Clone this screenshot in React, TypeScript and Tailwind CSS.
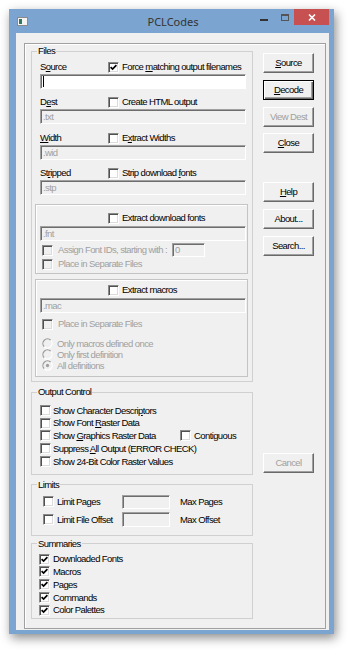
import React from 'react'

const font = "font-['Liberation_Sans',Arial,sans-serif] text-[9.5px] tracking-[-0.6px] leading-none whitespace-nowrap"

function Check({ checked = false, disabled = false }: { checked?: boolean; disabled?: boolean }) {
  return (
    <span
      className={`flex h-[11px] w-[11px] shrink-0 items-center justify-center border border-t-[#8a8a8a] border-l-[#8a8a8a] border-r-white border-b-white shadow-[inset_1px_1px_0_#505050,inset_-1px_-1px_0_#dcdcdc] ${
        disabled ? 'bg-[#f0f0f0]' : 'bg-white'
      }`}
    >
      {checked && (
        <svg width="7" height="7" viewBox="0 0 7 7">
          <path d="M0.6 3.1 L2.6 5.1 L6.4 1.1" stroke="#000" strokeWidth="1.7" fill="none" />
        </svg>
      )}
    </span>
  )
}

function Radio({ on = false }: { on?: boolean }) {
  return (
    <svg width="11" height="11" viewBox="0 0 12 12" className="shrink-0">
      <circle cx="6" cy="6" r="5" fill="#f0f0f0" />
      <path d="M9.54 2.46 A5 5 0 0 0 2.46 9.54" stroke="#9a9a9a" strokeWidth="1.3" fill="none" />
      <path d="M2.46 9.54 A5 5 0 0 0 9.54 2.46" stroke="#ffffff" strokeWidth="1.3" fill="none" />
      {on && <circle cx="6" cy="6" r="1.8" fill="#a0a0a0" />}
    </svg>
  )
}

function Field({ text = '', white = false, className = '' }: { text?: string; white?: boolean; className?: string }) {
  return (
    <div
      className={`flex items-center border border-t-[#a0a0a0] border-l-[#a0a0a0] border-r-white border-b-white shadow-[inset_1px_1px_0_#6d6d6d] pl-[2px] ${
        white ? 'bg-white' : 'bg-[#f0f0f0]'
      } ${className}`}
    >
      {white && <span className="h-[11px] w-px bg-black" />}
      <span className="text-[#a0a0a0]">{text}</span>
    </div>
  )
}

function Btn({ children, def = false, off = false, className = '' }: { children: React.ReactNode; def?: boolean; off?: boolean; className?: string }) {
  return (
    <div
      className={`flex h-[20px] w-[51px] items-center justify-center bg-[#f0f0f0] ${
        def
          ? 'border border-black shadow-[inset_1px_1px_0_#fff,inset_-1px_-1px_0_#696969,inset_-2px_-2px_0_#a0a0a0]'
          : 'border border-t-white border-l-white border-r-[#696969] border-b-[#696969] shadow-[inset_-1px_-1px_0_#a0a0a0]'
      } ${off ? 'text-[#a0a0a0]' : 'text-black'} ${className}`}
    >
      {children}
    </div>
  )
}

function Group({ title, className = '', children }: { title: string; className?: string; children: React.ReactNode }) {
  return (
    <fieldset className={`m-0 w-[222px] min-w-0 border border-[#d0d0d0] p-0 ${className}`}>
      <legend className="ml-[5px] h-[12px] px-[1px] leading-[12px]">{title}</legend>
      {children}
    </fieldset>
  )
}

function Row({ children, className = '' }: { children: React.ReactNode; className?: string }) {
  return <div className={`flex items-center ${className}`}>{children}</div>
}

export default function App() {
  return (
    <div className={`h-[651px] w-[350px] overflow-hidden bg-white pl-[9px] pt-[9px] ${font}`}>
      <div className="flex h-[625px] w-[325px] flex-col bg-[#7ba4d0] shadow-[2px_4px_10px_rgba(0,0,0,0.45)]">
        {/* title bar */}
        <div className="grid h-[24px] grid-cols-[1fr_auto_1fr] items-start pl-[8px] pr-[5px]">
          <div className="flex h-[24px] items-center">
            <svg width="11" height="9" viewBox="0 0 11 9">
              <rect x="0.5" y="0.5" width="10" height="8" fill="#f4f4f4" stroke="#8b8b8b" />
              <rect x="2" y="2" width="3" height="5" fill="#2f7a5e" />
            </svg>
          </div>
          <div className="flex h-[24px] items-center font-['Noto_Sans',sans-serif] text-[11px] tracking-normal text-[#333]">PCLCodes</div>
          <div className="flex justify-end">
            <div className="flex h-[16px] w-[23px] items-end justify-center pb-[4px]">
              <span className="h-[2px] w-[8px] bg-[#333]" />
            </div>
            <div className="flex h-[16px] w-[19px] items-center justify-center pt-px">
              <span className="h-[7px] w-[8px] border border-t-2 border-[#555]" />
            </div>
            <div className="flex h-[16px] w-[35px] items-center justify-center bg-[#c75050]">
              <svg width="8" height="7" viewBox="0 0 8 7">
                <path d="M1 0.5 L7 6.5 M7 0.5 L1 6.5" stroke="#fff" strokeWidth="1.6" />
              </svg>
            </div>
          </div>
        </div>

        {/* client */}
        <div className="mb-[4px] ml-[7px] mr-[5px] flex flex-1 flex-col bg-[#f0f0f0] pb-[1px] pl-[8px] pr-[3px] pt-[10px]">
          <div className="flex flex-1 border border-[#a0a0a0] pl-[6px] pt-px shadow-[inset_1px_1px_0_#fff]">
            {/* left column */}
            <div className="flex w-[222px] flex-col text-black">
              <Group title="Files" className="pb-[4px]">
                <Row className="ml-[8px] mt-[3px] h-[14px]">
                  <span className="w-[68px]">
                    S<span className="underline">o</span>urce
                  </span>
                  <Check checked />
                  <span className="ml-[3px]">
                    Force <span className="underline">m</span>atching output filenames
                  </span>
                </Row>
                <Field white className="ml-[8px] h-[15px] w-[206px]" />
                <Row className="ml-[8px] mt-[6px] h-[14px]">
                  <span className="w-[68px]">
                    D<span className="underline">e</span>st
                  </span>
                  <Check />
                  <span className="ml-[3px]">Create HTML output</span>
                </Row>
                <Field text=".txt" className="ml-[8px] h-[15px] w-[206px]" />
                <Row className="ml-[8px] mt-[7px] h-[14px]">
                  <span className="w-[68px]">
                    <span className="underline">W</span>idth
                  </span>
                  <Check />
                  <span className="ml-[3px]">
                    E<span className="underline">x</span>tract Widths
                  </span>
                </Row>
                <Field text=".wid" className="ml-[8px] h-[15px] w-[206px]" />
                <Row className="ml-[8px] mt-[6px] h-[14px]">
                  <span className="w-[68px]">
                    St<span className="underline">r</span>ipped
                  </span>
                  <Check />
                  <span className="ml-[3px]">
                    Strip download <span className="underline">f</span>onts
                  </span>
                </Row>
                <Field text=".stp" className="ml-[8px] h-[15px] w-[206px]" />

                <div className="ml-[3px] mt-[9px] h-[70px] w-[213px] border border-[#c4c4c4] shadow-[inset_1px_1px_0_#fff]">
                  <Row className="mt-[6px] h-[14px] pl-[72px]">
                    <Check />
                    <span className="ml-[3px]">Extract download fonts</span>
                  </Row>
                  <Field text=".fnt" className="ml-[4px] mt-px h-[15px] w-[206px]" />
                  <Row className="mt-[2px] h-[14px] pl-[6px] text-[#a0a0a0]">
                    <Check disabled />
                    <span className="ml-[5px] w-[114px]">Assign Font IDs, starting with :</span>
                    <Field text="0" className="h-[14px] w-[33px]" />
                  </Row>
                  <Row className="h-[14px] pl-[6px] text-[#a0a0a0]">
                    <Check disabled />
                    <span className="ml-[5px]">Place in Separate Files</span>
                  </Row>
                </div>

                <div className="ml-[3px] mt-[5px] h-[98px] w-[213px] border border-[#c4c4c4] shadow-[inset_1px_1px_0_#fff]">
                  <Row className="mt-[3px] h-[14px] pl-[72px]">
                    <Check />
                    <span className="ml-[3px]">Extract macros</span>
                  </Row>
                  <Field text=".mac" className="ml-[4px] mt-px h-[15px] w-[206px]" />
                  <Row className="mt-[4px] h-[14px] pl-[6px] text-[#a0a0a0]">
                    <Check disabled />
                    <span className="ml-[5px]">Place in Separate Files</span>
                  </Row>
                  <div className="mt-[7px] flex flex-col pl-[6px] text-[#a0a0a0]">
                    <Row className="h-[11px]">
                      <Radio />
                      <span className="ml-[4px]">Only macros defined once</span>
                    </Row>
                    <Row className="h-[11px]">
                      <Radio />
                      <span className="ml-[4px]">Only first definition</span>
                    </Row>
                    <Row className="h-[11px]">
                      <Radio on />
                      <span className="ml-[4px]">All definitions</span>
                    </Row>
                  </div>
                </div>
              </Group>

              <Group title="Output Control" className="mt-[4px] pb-[6px]">
                <div className="mt-[6px] flex flex-col pl-[8px]">
                  <Row className="h-[12.75px]">
                    <Check />
                    <span className="ml-[2px]">
                      Show Character Descri<span className="underline">p</span>tors
                    </span>
                  </Row>
                  <Row className="h-[12.75px]">
                    <Check />
                    <span className="ml-[2px]">
                      Show Font <span className="underline">R</span>aster Data
                    </span>
                  </Row>
                  <Row className="h-[12.75px]">
                    <Check />
                    <span className="ml-[2px] w-[127px]">
                      Show <span className="underline">G</span>raphics Raster Data
                    </span>
                    <Check />
                    <span className="ml-[3px]">Contiguous</span>
                  </Row>
                  <Row className="h-[12.75px]">
                    <Check />
                    <span className="ml-[2px]">
                      Suppress <span className="underline">A</span>ll Output (ERROR CHECK)
                    </span>
                  </Row>
                  <Row className="h-[12.75px]">
                    <Check />
                    <span className="ml-[2px]">Show 24-Bit Color Raster Values</span>
                  </Row>
                </div>
              </Group>

              <Group title="Limits" className="mt-[4px] pb-[8px]">
                <Row className="mt-[4px] h-[14px] pl-[11px]">
                  <Check />
                  <span className="ml-[3px] w-[65px]">Limit Pages</span>
                  <Field className="h-[14px] w-[48px]" />
                  <span className="ml-[10px]">Max Pages</span>
                </Row>
                <Row className="mt-[4px] h-[14px] pl-[11px]">
                  <Check />
                  <span className="ml-[3px] w-[65px]">Limit File Offset</span>
                  <Field className="h-[15px] w-[48px]" />
                  <span className="ml-[10px]">Max Offset</span>
                </Row>
              </Group>

              <Group title="Summaries" className="mt-[2px] pb-[1px]">
                <div className="mt-[3px] flex flex-col pl-[7px]">
                  {['Downloaded Fonts', 'Macros', 'Pages', 'Commands', 'Color Palettes'].map((s) => (
                    <Row key={s} className="h-[12.75px]">
                      <Check checked />
                      <span className="ml-[3px]">{s}</span>
                    </Row>
                  ))}
                </div>
              </Group>
            </div>

            {/* buttons */}
            <div className="ml-[10px] mt-[8px] flex flex-col">
              <Btn>
                <span className="underline">S</span>ource
              </Btn>
              <Btn def className="mt-[7px]">
                <span className="underline">D</span>ecode
              </Btn>
              <Btn off className="mt-[7px]">
                View Dest
              </Btn>
              <Btn className="mt-[6px]">
                <span className="underline">C</span>lose
              </Btn>
              <Btn className="mt-[29px]">
                <span className="underline">H</span>elp
              </Btn>
              <Btn className="mt-[7px]">About...</Btn>
              <Btn className="mt-[7px]">Search...</Btn>
              <Btn off className="mt-[197px]">
                Cancel
              </Btn>
            </div>
          </div>
        </div>
      </div>
    </div>
  )
}
